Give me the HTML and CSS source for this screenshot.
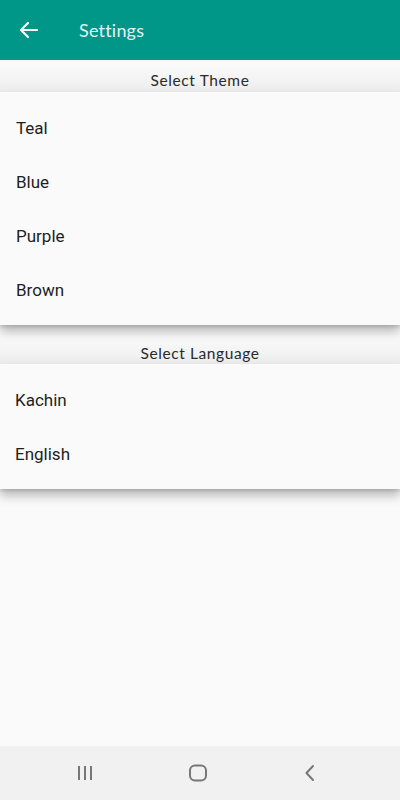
FILE: index.html
```html
<!DOCTYPE html>
<html>
<head>
<meta charset="utf-8">
<link rel="stylesheet" href="styles.css">
</head>
<body>
<div class="screen">
  <header class="appbar">
    <svg class="back" width="24" height="24" viewBox="0 0 24 24"><path d="M20 12H5M11 5l-7 7 7 7" fill="none" stroke="#ffffff" stroke-width="2.2" stroke-linecap="round" stroke-linejoin="round"/></svg>
    <span class="title">Settings</span>
  </header>
  <main class="content">
    <div class="section-title">Select Theme</div>
    <div class="card">
      <div class="item">Teal</div>
      <div class="item">Blue</div>
      <div class="item">Purple</div>
      <div class="item">Brown</div>
    </div>
    <div class="section-title lang">Select Language</div>
    <div class="card">
      <div class="item alt">Kachin</div>
      <div class="item alt">English</div>
    </div>
  </main>
  <nav class="navbar">
    <svg width="20" height="20" viewBox="0 0 20 20"><path d="M4 3v14M10 3v14M16 3v14" stroke="#777" stroke-width="2"/></svg>
    <svg width="20" height="20" viewBox="0 0 20 20"><rect x="2" y="2.5" width="16" height="15" rx="5" fill="none" stroke="#777" stroke-width="2"/></svg>
    <svg width="20" height="20" viewBox="0 0 20 20"><path d="M13 3l-6.5 7 6.5 7" fill="none" stroke="#777" stroke-width="2" stroke-linecap="round" stroke-linejoin="round"/></svg>
  </nav>
</div>
</body>
</html>
```
FILE: styles.css
```css
html, body { margin: 0; padding: 0; }
body { background: #fafafa; font-family: Roboto, "Liberation Sans", sans-serif; }
.screen { width: 400px; height: 800px; display: flex; flex-direction: column; background: #fafafa; overflow: hidden; }
.appbar { height: 60px; background: #009688; display: flex; align-items: center; padding-left: 17px; box-sizing: border-box; flex-shrink: 0; }
.back { display: block; }
.title { margin-left: 38px; color: #e3f4f2; font-family: Lato, "Open Sans", sans-serif; font-size: 18px; letter-spacing: 0.2px; }
.content { flex: 1; display: flex; flex-direction: column; }
.section-title { height: 30px; box-sizing: border-box; padding-top: 6px; margin-top: 2px; display: flex; align-items: center; justify-content: center; font-family: Lato, "Open Sans", sans-serif; font-size: 15.5px; color: #2a2a2a; letter-spacing: 0.6px; background: linear-gradient(#fbfbfb, #f3f3f3 60%, #ebebeb); }
.section-title.lang { margin-top: 10px; height: 29px; }
.card { background: #fafafa; padding: 9px 0 8px; box-shadow: 0 7px 10px rgba(0,0,0,0.25), 0 2px 3px rgba(0,0,0,0.12); position: relative; z-index: 1; }
.item { height: 54px; display: flex; align-items: center; padding-left: 16px; font-size: 17px; color: #1e1e1e; }
.item.alt { padding-left: 15px; }
.navbar { height: 54px; background: #f1f1f1; display: flex; align-items: center; justify-content: space-between; padding: 0 80px 0 75px; flex-shrink: 0; }
.navbar svg { display: block; }
```
